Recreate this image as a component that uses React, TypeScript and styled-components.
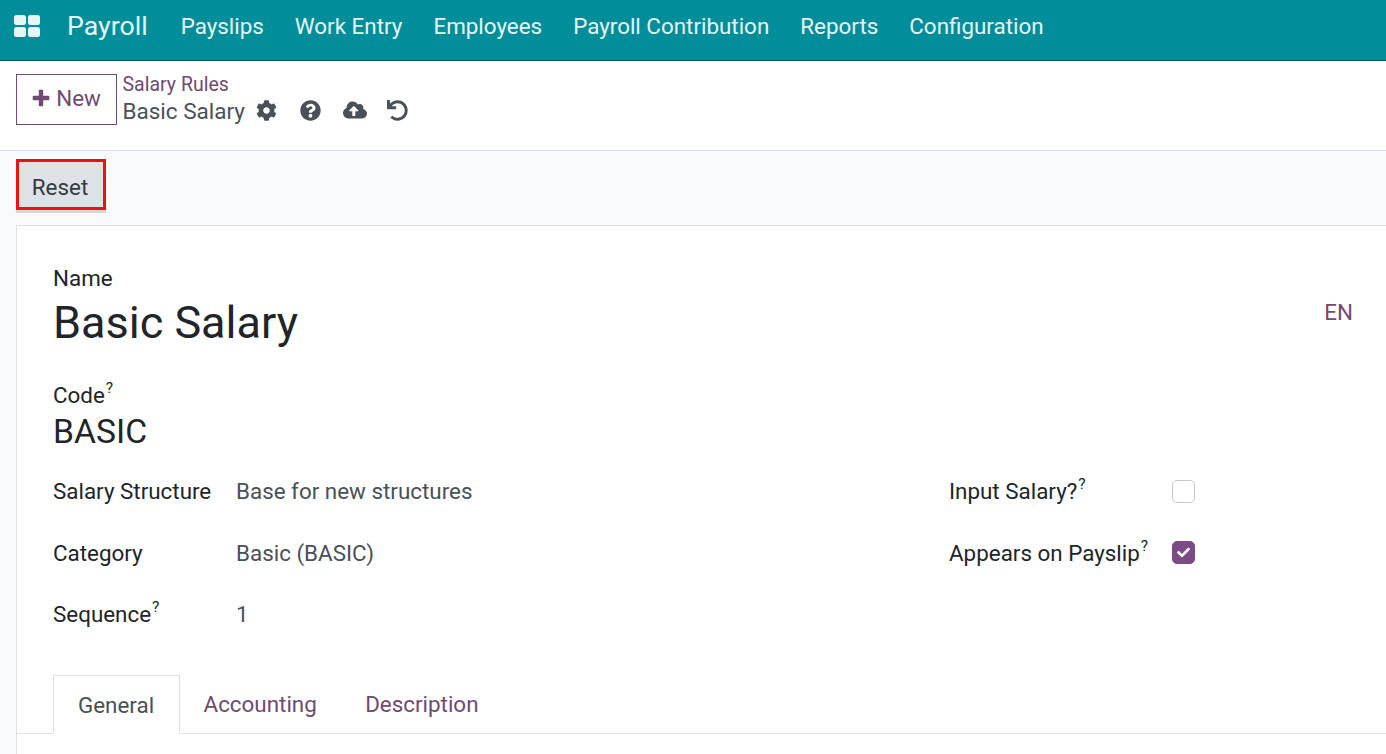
import React from 'react'
import styled, { createGlobalStyle } from 'styled-components'
import { FaCog, FaQuestionCircle, FaCloudUploadAlt, FaUndo, FaCheck } from 'react-icons/fa'

const linkColor = '#6f4a72'

const GlobalStyle = createGlobalStyle`
  html, body {
    margin: 0;
    height: 100%;
    overflow: hidden;
    background: #f9fafb;
    font-family: Roboto, "Noto Sans", sans-serif;
    color: #212529;
  }
  * { box-sizing: border-box; }
`

const NavBar = styled.div`
  display: flex;
  align-items: center;
  height: 61px;
  padding: 0 0 8px 14px;
  background: #018d9a;
  border-bottom: 1px solid #05525a;
  color: #e6f6f7;
`

const Brand = styled.span`
  margin: 0 33px 0 27px;
  font-size: 26.7px;
`

const NavItem = styled.span`
  margin-right: 31px;
  font-size: 22.4px;
`

const ControlPanel = styled.div`
  display: flex;
  height: 90px;
  padding: 13px 16px 0;
  background: #fff;
  border-bottom: 1px solid #dee2e6;
`

const NewButton = styled.button`
  display: flex;
  align-items: center;
  justify-content: center;
  gap: 6px;
  width: 101px;
  height: 51px;
  padding: 0 0 3px;
  background: #fff;
  border: 1px solid ${linkColor};
  color: ${linkColor};
  font: 400 22.4px Roboto, sans-serif;
`

const Breadcrumb = styled.div`
  display: flex;
  flex-direction: column;
  margin-left: 5.5px;
`

const ParentLink = styled.span`
  height: 24px;
  margin-top: -1px;
  color: ${linkColor};
  font-size: 19.5px;
`

const Current = styled.div`
  display: flex;
  align-items: center;
  height: 28px;
  color: #495057;
  font-size: 22.5px;
`

const ActionIcon = styled.span<{ $gap: number }>`
  display: flex;
  margin: 0 0 2px ${p => p.$gap}px;
  font-size: 21px;
  color: #495057;
`

const StatusBar = styled.div`
  height: 74px;
  padding: 8px 16px 0;
`

const ResetButton = styled.button`
  display: block;
  width: 90px;
  height: 51px;
  padding: 5px 2px 0 0;
  background: #dee2e6;
  border: 3px solid #ee1111;
  box-shadow: 0 3px 0 #d4d6d9;
  color: #343a40;
  font: 400 22.4px Roboto, sans-serif;
`

const Sheet = styled.div`
  position: relative;
  margin-left: 16px;
  height: 530px;
  padding: 38px 36px 0;
  background: #fff;
  border-left: 1px solid #dee2e6;
  border-top: 1px solid #dee2e6;
`

const Label = styled.div`
  font-size: 22.4px;
  line-height: 28px;
`

const Mark = styled.sup`
  font-size: 15.5px;
  line-height: 0;
  vertical-align: 10px;
  margin-left: 1px;
`

const TitleInput = styled.div`
  font-size: 45px;
  line-height: 58px;
  margin-top: 2px;
`

const LangTag = styled.span`
  position: absolute;
  top: 73px;
  right: 33px;
  color: ${linkColor};
  font-size: 22.4px;
`

const CodeBlock = styled.div`
  margin-top: 29px;
`

const CodeValue = styled.div`
  font-size: 33.7px;
  line-height: 45px;
`

const FieldColumns = styled.div`
  display: flex;
  margin-top: 6.5px;
`

const LeftFields = styled.div`
  width: 896px;
`

const FieldRow = styled.div`
  display: flex;
  align-items: center;
  height: 61.5px;
`

const FieldLabel = styled(Label)`
  width: 183px;
`

const FieldValue = styled.span`
  color: #495057;
  font-size: 22.4px;
`

const CheckLabel = styled(Label)`
  width: 223px;
`

const CheckBox = styled.span<{ $on?: boolean }>`
  display: flex;
  align-items: center;
  justify-content: center;
  width: 23px;
  height: 23px;
  border-radius: 5px;
  border: 1px solid ${p => (p.$on ? '#7c4a85' : '#c4c7ca')};
  background: ${p => (p.$on ? '#7c4a85' : '#fff')};
  color: #fff;
  font-size: 13px;
`

const Tabs = styled.div`
  display: flex;
  position: absolute;
  left: 0;
  right: 0;
  top: 449px;
  height: 59px;
  padding-left: 36px;
  border-bottom: 1px solid #dee2e6;
`

const Tab = styled.span<{ $active?: boolean }>`
  height: 59px;
  padding: 0 24.4px 0 24px;
  line-height: 58px;
  font-size: 22.4px;
  color: ${p => (p.$active ? '#495057' : linkColor)};
  background: ${p => (p.$active ? '#fff' : 'transparent')};
  ${p => p.$active && 'border: 1px solid #dee2e6; border-bottom: 1px solid #fff;'}
`

const AppsIcon = () => (
  <svg width="26" height="22" viewBox="0 0 26 22" fill="#e6f6f7">
    <rect x="0" y="0" width="12" height="10" rx="2.5" />
    <rect x="14" y="0" width="12" height="10" rx="2.5" />
    <rect x="0" y="12" width="12" height="10" rx="2.5" />
    <rect x="14" y="12" width="12" height="10" rx="2.5" />
  </svg>
)

// the font awesome 4 plus, heavier than the one in the icon package
const PlusIcon = () => (
  <svg width="18" height="18" viewBox="0 0 18 18" fill="currentColor">
    <path d="M6.8 1.5a.8.8 0 0 1 .8-.8h2.8a.8.8 0 0 1 .8.8v5.3h5.3a.8.8 0 0 1 .8.8v2.8a.8.8 0 0 1-.8.8h-5.3v5.3a.8.8 0 0 1-.8.8H7.6a.8.8 0 0 1-.8-.8v-5.3H1.5a.8.8 0 0 1-.8-.8V7.6a.8.8 0 0 1 .8-.8h5.3z" />
  </svg>
)

const navItems = ['Payslips', 'Work Entry', 'Employees', 'Payroll Contribution', 'Reports', 'Configuration']

const App = () => {
  return (
    <>
      <GlobalStyle />
      <NavBar>
        <AppsIcon />
        <Brand>Payroll</Brand>
        {navItems.map(item => <NavItem key={item}>{item}</NavItem>)}
      </NavBar>
      <ControlPanel>
        <NewButton type="button"><PlusIcon />New</NewButton>
        <Breadcrumb>
          <ParentLink>Salary Rules</ParentLink>
          <Current>
            Basic Salary
            <ActionIcon $gap={11}><FaCog /></ActionIcon>
            <ActionIcon $gap={23}><FaQuestionCircle /></ActionIcon>
            <ActionIcon $gap={22}><FaCloudUploadAlt size={24} /></ActionIcon>
            <ActionIcon $gap={20}><FaUndo /></ActionIcon>
          </Current>
        </Breadcrumb>
      </ControlPanel>
      <StatusBar>
        <ResetButton type="button">Reset</ResetButton>
      </StatusBar>
      <Sheet>
        <Label>Name</Label>
        <TitleInput>Basic Salary</TitleInput>
        <LangTag>EN</LangTag>
        <CodeBlock>
          <Label>Code<Mark>?</Mark></Label>
          <CodeValue>BASIC</CodeValue>
        </CodeBlock>
        <FieldColumns>
          <LeftFields>
            <FieldRow>
              <FieldLabel>Salary Structure</FieldLabel>
              <FieldValue>Base for new structures</FieldValue>
            </FieldRow>
            <FieldRow>
              <FieldLabel>Category</FieldLabel>
              <FieldValue>Basic (BASIC)</FieldValue>
            </FieldRow>
            <FieldRow>
              <FieldLabel>Sequence<Mark>?</Mark></FieldLabel>
              <FieldValue>1</FieldValue>
            </FieldRow>
          </LeftFields>
          <div>
            <FieldRow>
              <CheckLabel>Input Salary?<Mark>?</Mark></CheckLabel>
              <CheckBox />
            </FieldRow>
            <FieldRow>
              <CheckLabel>Appears on Payslip<Mark>?</Mark></CheckLabel>
              <CheckBox $on><FaCheck /></CheckBox>
            </FieldRow>
          </div>
        </FieldColumns>
        <Tabs>
          <Tab $active>General</Tab>
          <Tab>Accounting</Tab>
          <Tab>Description</Tab>
        </Tabs>
      </Sheet>
    </>
  )
}

export default App
